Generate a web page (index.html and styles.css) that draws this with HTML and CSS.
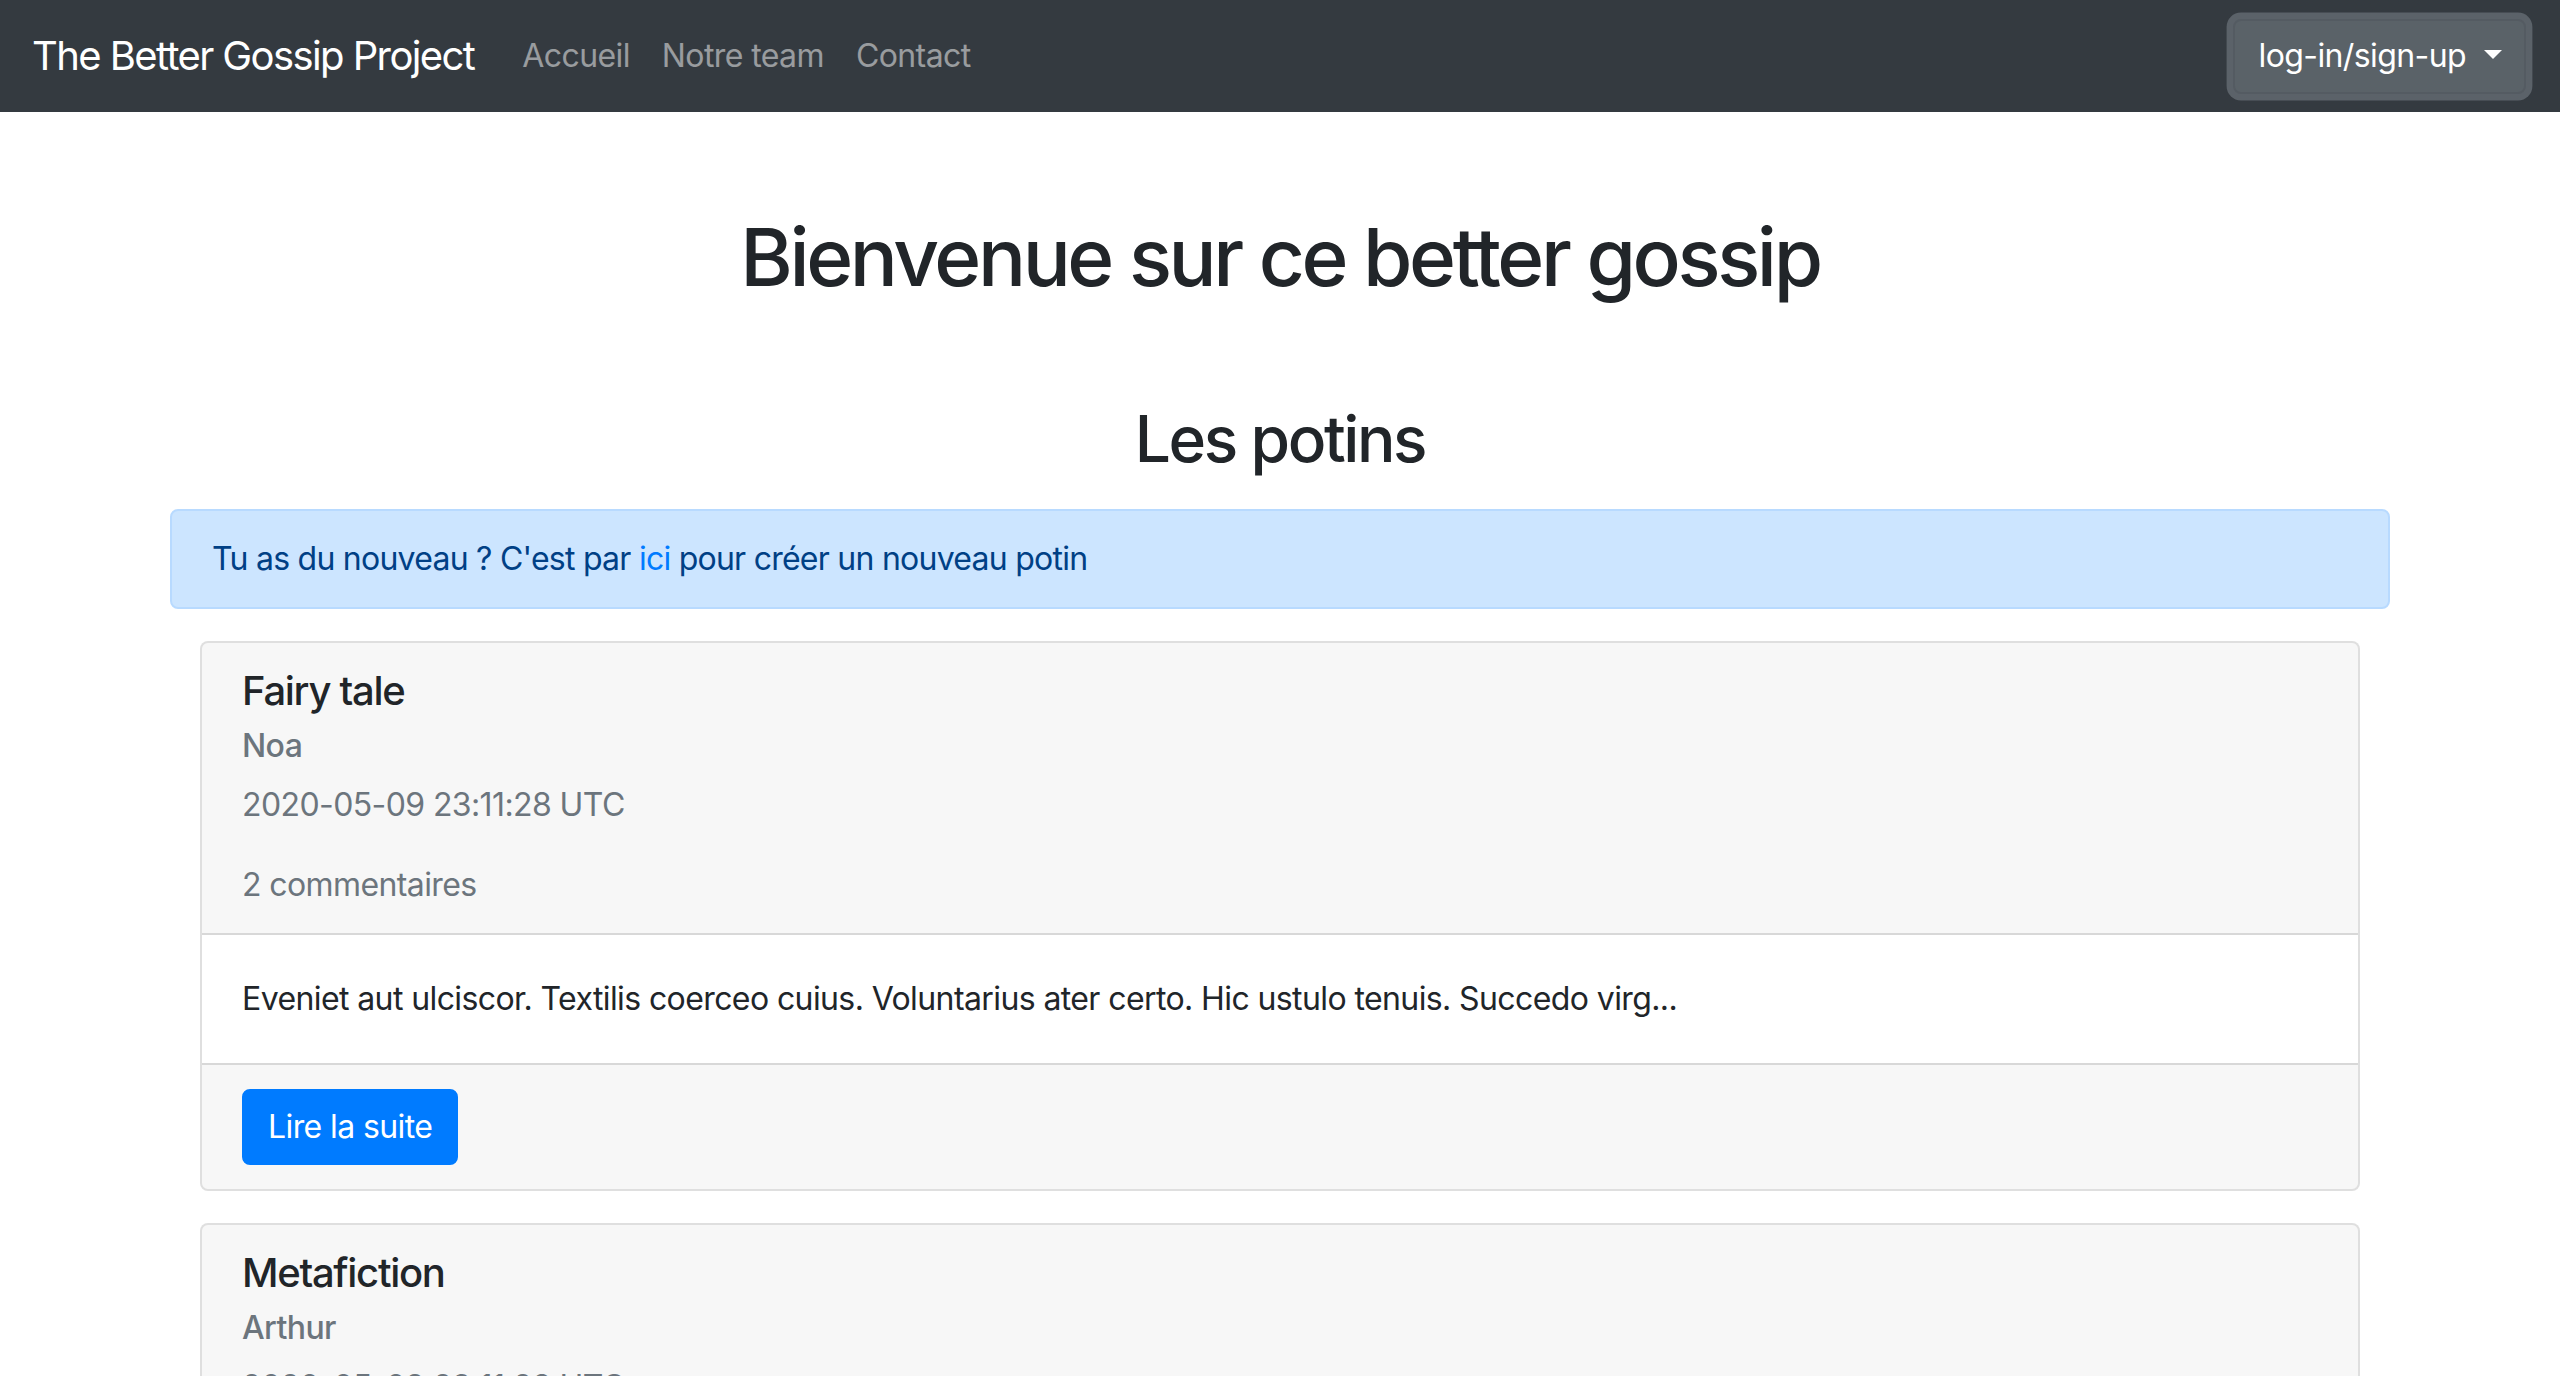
FILE: index.html
```html
<!DOCTYPE html>
<html lang="fr">
<head>
<meta charset="utf-8">
<title>The Better Gossip Project</title>
<link rel="stylesheet" href="styles.css">
</head>
<body>
<nav class="navbar">
  <a class="brand" href="#">The Better Gossip Project</a>
  <ul class="nav">
    <li><a class="nav-link" href="#">Accueil</a></li>
    <li><a class="nav-link" href="#">Notre team</a></li>
    <li><a class="nav-link" href="#">Contact</a></li>
  </ul>
  <button class="btn-account" type="button">log-in/sign-up<span class="caret"></span></button>
</nav>

<main class="container">
  <h1 class="title">Bienvenue sur ce better gossip</h1>
  <h2 class="subtitle">Les potins</h2>
  <div class="alert">Tu as du nouveau ? C'est par <a href="#" class="alert-link">ici</a> pour créer un nouveau potin</div>

  <div class="card">
    <div class="card-header">
      <h5 class="card-title">Fairy tale</h5>
      <h6 class="card-author">Noa</h6>
      <p class="card-meta">2020-05-09 23:11:28 UTC</p>
      <p class="card-meta last">2 commentaires</p>
    </div>
    <div class="card-body">
      <p class="card-text">Eveniet aut ulciscor. Textilis coerceo cuius. Voluntarius ater certo. Hic ustulo tenuis. Succedo virg...</p>
    </div>
    <div class="card-footer">
      <a href="#" class="btn-primary">Lire la suite</a>
    </div>
  </div>

  <div class="card">
    <div class="card-header">
      <h5 class="card-title">Metafiction</h5>
      <h6 class="card-author">Arthur</h6>
      <p class="card-meta">2020-05-09 23:11:28 UTC</p>
      <p class="card-meta last">1 commentaire</p>
    </div>
    <div class="card-body">
      <p class="card-text">Tollo tepesco aestas. Cedo aperio cavus. Asporto tamisium tutamen. Vorago sunt deficio. Cibus...</p>
    </div>
    <div class="card-footer">
      <a href="#" class="btn-primary">Lire la suite</a>
    </div>
  </div>
</main>
</body>
</html>
```

FILE: styles.css
```css
* { box-sizing: border-box; }

html, body {
  margin: 0;
  padding: 0;
}

body {
  font-family: Inter, "Liberation Sans", Arial, sans-serif;
  font-size: 32px;
  line-height: 48px;
  letter-spacing: -0.6px;
  color: #212529;
  background: #fff;
}

a { text-decoration: none; }

/* Navbar */
.navbar {
  display: flex;
  align-items: center;
  height: 112px;
  padding: 16px 34px 16px 32px;
  background: #343a40;
}

.brand {
  font-size: 40px;
  line-height: 60px;
  letter-spacing: -1.6px;
  padding: 10px 0;
  margin-right: 32px;
  color: #fff;
  white-space: nowrap;
}

.nav {
  display: flex;
  list-style: none;
  margin: 0;
  padding: 0;
  flex: 1;
}

.nav-link {
  display: block;
  padding: 8px 16px;
  color: rgba(255, 255, 255, 0.5);
}

.btn-account {
  display: inline-flex;
  align-items: center;
  height: 75px;
  padding: 0 22px 0 24px;
  font-family: inherit;
  font-size: 32px;
  line-height: 48px;
  letter-spacing: -0.6px;
  color: #fff;
  background: #5a6268;
  border: 2px solid #545b62;
  border-radius: 8px;
  box-shadow: 0 0 0 6.4px rgba(130, 138, 145, 0.5);
}

.caret {
  display: inline-block;
  width: 0;
  height: 0;
  margin-left: 18px;
  margin-top: -4px;
  border-top: 9.6px solid #fff;
  border-left: 9.6px solid transparent;
  border-right: 9.6px solid transparent;
}

/* Main */
.container {
  max-width: 2280px;
  margin: 0 auto;
  padding: 97px 30px 40px;
}

.title {
  margin: 0 0 95px;
  font-size: 80px;
  line-height: 96px;
  letter-spacing: -3.4px;
  font-weight: 500;
  text-align: center;
}

.subtitle {
  margin: 0 0 32px;
  font-size: 64px;
  line-height: 77px;
  letter-spacing: -2.4px;
  font-weight: 500;
  text-align: center;
}

.alert {
  padding: 24px 40px;
  margin-bottom: 32px;
  letter-spacing: -0.75px;
  color: #004085;
  background: #cce5ff;
  border: 2px solid #b8daff;
  border-radius: 8px;
}

.alert-link { color: #007bff; }

/* Cards */
.card {
  margin: 0 30px 32px;
  background: #fff;
  border: 2px solid rgba(0, 0, 0, 0.125);
  border-radius: 8px;
  overflow: hidden;
}

.card-header {
  padding: 24px 40px 24px;
  background: rgba(0, 0, 0, 0.03);
  border-bottom: 2px solid rgba(0, 0, 0, 0.125);
}

.card-title {
  margin: 0 0 24px;
  font-size: 40px;
  line-height: 48px;
  letter-spacing: -1.3px;
  font-weight: 500;
}

.card-author {
  margin: -12px 0 16px;
  font-size: 32px;
  line-height: 38px;
  font-weight: 500;
  color: #6c757d;
}

.card-meta {
  margin: 0 0 32px;
  color: #6c757d;
}

.card-meta.last { margin-bottom: 0; }

.card-body {
  padding: 40px;
}

.card-text { margin: 0; }

.card-footer {
  padding: 24px 40px;
  background: rgba(0, 0, 0, 0.03);
  border-top: 2px solid rgba(0, 0, 0, 0.125);
}

.btn-primary {
  display: inline-block;
  padding: 12px 24px;
  font-size: 32px;
  line-height: 48px;
  color: #fff;
  background: #007bff;
  border: 2px solid #007bff;
  border-radius: 8px;
}
```
